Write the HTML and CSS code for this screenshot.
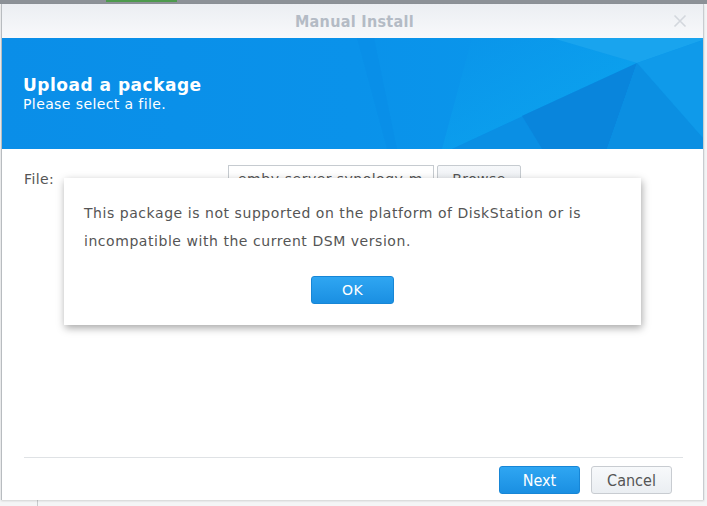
FILE: index.html
```html
<!DOCTYPE html>
<html>
<head>
<meta charset="utf-8">
<link rel="stylesheet" href="styles.css">
</head>
<body>
<div class="desk-strip"><span class="desk-tab"></span></div>
<div class="window">
  <div class="titlebar">
    <span class="title">Manual Install</span>
    <svg class="close" width="14" height="14" viewBox="0 0 14 14"><path d="M1.5 1.5 L12.5 12.5 M12.5 1.5 L1.5 12.5" stroke="#d3d7dd" stroke-width="1.6" fill="none"/></svg>
  </div>
  <div class="banner">
    <svg class="banner-art" width="701" height="111" viewBox="0 0 701 111" preserveAspectRatio="none">
      <defs>
        <linearGradient id="bg" x1="0" y1="0" x2="1" y2="0">
          <stop offset="0" stop-color="#0a8ee8"/>
          <stop offset="0.5" stop-color="#0a92ea"/>
          <stop offset="1" stop-color="#0a9aec"/>
        </linearGradient>
        <linearGradient id="cy" x1="0" y1="0" x2="1" y2="1">
          <stop offset="0" stop-color="#0a94ea"/>
          <stop offset="1" stop-color="#0caaf0"/>
        </linearGradient>
      </defs>
      <rect width="701" height="111" fill="url(#bg)"/>
      <polygon points="355,0 372,0 395,111 385,111" fill="#0a8ae4" opacity="0.35"/>
      <polygon points="470,0 550,0 635,25 450,111 440,111" fill="url(#cy)" opacity="0.75"/>
      <polygon points="550,0 701,0 701,2 635,25" fill="#19a4ee"/>
      <polygon points="635,25 701,2 701,100" fill="#0f9aea"/>
      <polygon points="635,25 450,111 540,111 520,78" fill="#0a8fe4"/>
      <polygon points="635,25 520,78 540,111 605,111" fill="#0985dc"/>
      <polygon points="635,25 605,111 701,111 701,100" fill="#0b8fe2"/>
    </svg>
    <div class="banner-text">
      <div class="banner-title">Upload a package</div>
      <div class="banner-sub">Please select a file.</div>
    </div>
  </div>
  <div class="content">
    <div class="file-row">
      <span class="file-label">File:</span>
      <span class="file-input">emby-server-synology-m</span>
      <span class="browse">Browse</span>
    </div>
    <div class="spacer"></div>
    <div class="footer">
      <button class="btn btn-primary">Next</button>
      <button class="btn btn-default">Cancel</button>
    </div>
    <div class="modal">
      <p class="modal-text">This package is not supported on the platform of DiskStation or is incompatible with the current DSM version.</p>
      <div class="modal-actions"><button class="btn btn-primary btn-ok">OK</button></div>
    </div>
  </div>
</div>
<div class="desk-bottom"><span class="desk-line"></span></div>
</body>
</html>
```
FILE: styles.css
```css
html, body {
  margin: 0;
  padding: 0;
}
body {
  width: 707px;
  height: 506px;
  overflow: hidden;
  background: #f4f5f6;
  font-family: "DejaVu Sans", Verdana, sans-serif;
}
.desk-strip {
  height: 4px;
  background: #8c9197;
  display: flex;
}
.desk-tab {
  margin-left: 106px;
  width: 71px;
  height: 2px;
  background: #4d9a4d;
}
.window {
  margin: 0 3px 0 1px;
  height: 496px;
  background: #fff;
  border-left: 1px solid #b8bcc0;
  border-right: 1px solid #c8ccd0;
  box-shadow: 0 1px 2px rgba(0,0,0,0.15);
  display: flex;
  flex-direction: column;
  position: relative;
}
.titlebar {
  height: 34px;
  flex: none;
  background: linear-gradient(#ebeef2, #f8f9fb);
  display: flex;
  align-items: center;
  justify-content: center;
  position: relative;
}
.title {
  font-family: "DejaVu Sans Condensed", "DejaVu Sans", sans-serif;
  font-stretch: condensed;
  font-weight: bold;
  font-size: 16px;
  letter-spacing: 0.3px;
  color: #b4bbc5;
  margin-left: 4px;
}
.close {
  position: absolute;
  right: 16px;
  top: 10px;
}
.banner {
  height: 111px;
  flex: none;
  position: relative;
  overflow: hidden;
}
.banner-art {
  position: absolute;
  left: 0;
  top: 0;
  width: 100%;
  height: 100%;
}
.banner-text {
  position: relative;
  padding: 37px 0 0 21px;
  color: #fff;
}
.banner-title {
  font-weight: bold;
  font-size: 17px;
  letter-spacing: 0.5px;
  line-height: 20px;
}
.banner-sub {
  font-size: 14px;
  letter-spacing: 0.4px;
  line-height: 21px;
  margin-top: -1px;
}
.content {
  flex: 1;
  display: flex;
  flex-direction: column;
  padding: 16px 20px 0 22px;
  position: relative;
}
.file-row {
  display: flex;
  align-items: flex-start;
  height: 26px;
}
.file-label {
  font-size: 14px;
  letter-spacing: 0.4px;
  color: #555;
  width: 204px;
  padding-top: 6px;
}
.file-input {
  width: 206px;
  height: 24px;
  border: 1px solid #c6cbd0;
  font-size: 14px;
  letter-spacing: 0.5px;
  color: #555;
  padding: 5px 0 0 9px;
  box-sizing: border-box;
  overflow: hidden;
  white-space: nowrap;
}
.browse {
  margin-left: 3px;
  width: 84px;
  height: 24px;
  border: 1px solid #c6cbd0;
  border-radius: 2px;
  background: linear-gradient(#f6f8fa, #e9edf1);
  font-size: 14px;
  letter-spacing: 0.4px;
  color: #555;
  box-sizing: border-box;
  text-align: center;
  padding-top: 5px;
}
.spacer {
  flex: 1;
}
.footer {
  border-top: 1px solid #dfe2e5;
  display: flex;
  justify-content: flex-end;
  gap: 11px;
  padding: 8px 11px 6px 0;
}
.btn {
  font-family: "DejaVu Sans Condensed", "DejaVu Sans", sans-serif;
  font-stretch: condensed;
  font-size: 16px;
  height: 28px;
  border-radius: 3px;
  box-sizing: border-box;
  padding: 0;
  cursor: default;
}
.footer .btn {
  width: 81px;
}
.btn-primary {
  color: #fff;
  background: linear-gradient(#2fa6f2, #1a8fe2);
  border: 1px solid #1786d6;
}
.btn-default {
  color: #555;
  background: linear-gradient(#f7f9fb, #eaeef2);
  border: 1px solid #c8ccd1;
}
.modal {
  position: absolute;
  left: 62px;
  top: 29px;
  width: 577px;
  height: 147px;
  background: #fff;
  box-shadow: 1px 3px 8px rgba(0,0,0,0.35);
  box-sizing: border-box;
  padding: 21px 20px 0 20px;
}
.modal-text {
  margin: 0;
  font-size: 14px;
  letter-spacing: 0.55px;
  line-height: 28px;
  color: #555;
}
.modal-actions {
  display: flex;
  justify-content: center;
  margin-top: 21px;
}
.btn-ok {
  width: 83px;
  height: 28px;
  font-family: "DejaVu Sans", sans-serif;
  font-stretch: normal;
  font-size: 14px;
  letter-spacing: 0.3px;
}
.desk-bottom {
  height: 6px;
  display: flex;
}
.desk-line {
  margin-left: 37px;
  width: 1px;
  height: 6px;
  background: #c9cbcd;
}
```
